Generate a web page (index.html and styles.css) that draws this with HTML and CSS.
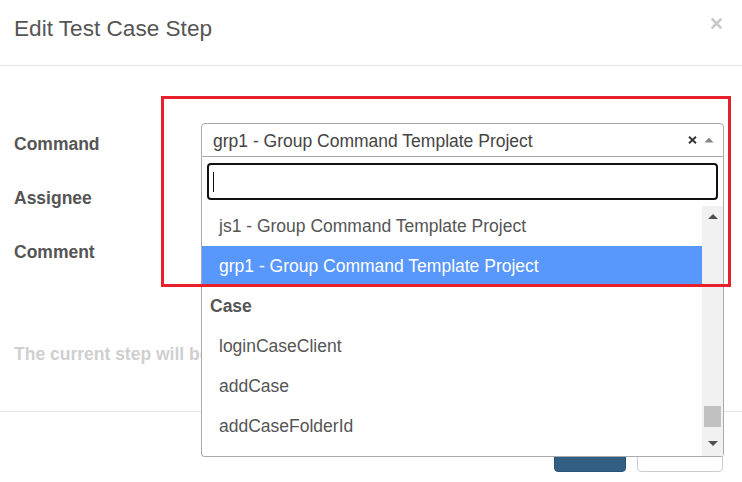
FILE: index.html
```html
<!DOCTYPE html>
<html>
<head>
<meta charset="utf-8">
<title>Edit Test Case Step</title>
<link rel="stylesheet" href="styles.css">
</head>
<body>
<div class="modal">
  <div class="modal-header">
    <h4 class="modal-title">Edit Test Case Step</h4>
    <svg class="close" width="11" height="11" viewBox="0 0 11 11"><path d="M1.5 1.5 L9.5 9.5 M9.5 1.5 L1.5 9.5" stroke="#c9c9c9" stroke-width="2.6" stroke-linecap="square"/></svg>
  </div>
  <div class="modal-body">
    <div class="form-row">
      <label class="form-label">Command</label>
      <div class="select-wrap">
        <div class="select">
          <span class="select-text">grp1 - Group Command Template Project</span>
          <svg class="clear" width="9" height="8" viewBox="0 0 9 8"><path d="M1 0.8 L8 7.2 M8 0.8 L1 7.2" stroke="#333" stroke-width="1.9"/></svg>
          <svg class="arrow" width="10" height="6" viewBox="0 0 10 6"><path d="M0.5 5.5 L5 0.5 L9.5 5.5 Z" fill="#888"/></svg>
        </div>
        <div class="dropdown">
          <div class="search">
            <div class="search-input"><span class="caret"></span></div>
          </div>
          <div class="results">
            <ul class="options">
              <li class="option">js1 - Group Command Template Project</li>
              <li class="option highlighted">grp1 - Group Command Template Project</li>
              <li class="group">
                <div class="group-label">Case</div>
                <ul class="options">
                  <li class="option">loginCaseClient</li>
                  <li class="option">addCase</li>
                  <li class="option">addCaseFolderId</li>
                </ul>
              </li>
            </ul>
            <div class="scrollbar">
              <div class="sb-btn sb-up"><svg width="10" height="5" viewBox="0 0 10 5"><path d="M0 5 L5 0 L10 5 Z" fill="#505050"/></svg></div>
              <div class="sb-track"><div class="sb-thumb"></div></div>
              <div class="sb-btn sb-down"><svg width="10" height="5" viewBox="0 0 10 5"><path d="M0 0 L10 0 L5 5 Z" fill="#505050"/></svg></div>
            </div>
          </div>
        </div>
      </div>
    </div>
    <div class="form-row">
      <label class="form-label">Assignee</label>
      <div class="field"></div>
    </div>
    <div class="form-row">
      <label class="form-label">Comment</label>
      <div class="field"></div>
    </div>
    <p class="note">The current step will be updated.</p>
  </div>
  <div class="modal-footer">
    <button class="btn btn-primary">Save</button>
    <button class="btn btn-default">Cancel</button>
  </div>
  <div class="annotation"></div>
</div>
</body>
</html>
```

FILE: styles.css
```css
html, body {
  margin: 0;
  padding: 0;
  background: #fff;
}
body {
  font-family: "Liberation Sans", Arial, sans-serif;
  font-size: 17.5px;
  color: #555;
}
.modal {
  position: relative;
  width: 742px;
  height: 482px;
  overflow: hidden;
  background: #fff;
}
.modal-header {
  height: 65px;
  border-bottom: 1px solid #e5e5e5;
  padding: 0 20px 0 14px;
  display: flex;
  justify-content: space-between;
  align-items: flex-start;
}
.modal-title {
  margin: 16px 0 0;
  font-size: 22.6px;
  line-height: 26px;
  font-weight: normal;
  color: #555;
}
.close {
  margin-top: 18px;
  display: block;
}
.modal-body {
  box-sizing: border-box;
  height: 345px;
  padding: 57px 18px 0 14px;
}
.form-row {
  display: flex;
  height: 34px;
  margin-bottom: 20px;
}
.form-label {
  width: 187px;
  flex: none;
  padding-top: 11px;
  line-height: 20px;
  font-weight: bold;
  color: #555;
}
.select-wrap, .field {
  position: relative;
  flex: 1;
}
.select {
  box-sizing: border-box;
  height: 34px;
  border: 1px solid #aaa;
  border-radius: 4px 4px 0 0;
  padding: 2px 9px 0 11px;
  display: flex;
  align-items: center;
  background: #fff;
}
.select-text {
  flex: 1;
  line-height: 30px;
  color: #444;
  white-space: nowrap;
}
.clear {
  display: block;
  margin-right: 7px;
  margin-top: -2px;
}
.arrow {
  display: block;
  margin-top: -2px;
}
.dropdown {
  position: absolute;
  left: 0;
  top: 34px;
  width: 523px;
  height: 300px;
  box-sizing: border-box;
  border: 1px solid #aaa;
  border-top: none;
  border-radius: 0 0 4px 4px;
  background: #fff;
  display: flex;
  flex-direction: column;
  z-index: 5;
}
.search {
  padding: 6px 5px;
}
.search-input {
  box-sizing: border-box;
  height: 37px;
  border: 2px solid #111;
  border-radius: 4px;
  display: flex;
  align-items: center;
  padding-left: 4px;
}
.caret {
  display: block;
  width: 1px;
  height: 20px;
  background: #111;
}
.results {
  flex: 1;
  display: flex;
  min-height: 0;
}
.options {
  list-style: none;
  margin: 0;
  padding: 0;
}
.results > .options {
  flex: 1;
  overflow: hidden;
}
.option {
  height: 40px;
  line-height: 40px;
  padding-left: 17px;
  color: #555;
  white-space: nowrap;
}
.option.highlighted {
  background: #5897fb;
  color: #fff;
}
.group-label {
  height: 40px;
  line-height: 40px;
  padding-left: 8px;
  font-weight: bold;
  color: #555;
}
.scrollbar {
  width: 21px;
  flex: none;
  background: #f1f1f1;
  display: flex;
  flex-direction: column;
}
.sb-btn {
  display: flex;
  justify-content: center;
}
.sb-up {
  height: 20px;
  align-items: center;
}
.sb-up svg, .sb-down svg {
  display: block;
}
.sb-down {
  height: 24px;
  padding-top: 9px;
  box-sizing: border-box;
}
.sb-track {
  flex: 1;
}
.sb-thumb {
  margin: 180px 2px 0;
  height: 21px;
  background: #c1c1c1;
}
.note {
  margin: 79px 0 0;
  width: 187px;
  overflow: hidden;
  line-height: 20px;
  font-weight: bold;
  color: #cfcfcf;
  white-space: nowrap;
}
.modal-footer {
  border-top: 1px solid #e5e5e5;
  padding: 15px 19px 0 0;
  display: flex;
  justify-content: flex-end;
  gap: 11px;
}
.btn {
  height: 45px;
  box-sizing: border-box;
  border-radius: 4px;
  font-family: "Liberation Sans", Arial, sans-serif;
  font-size: 15px;
  padding: 0 0 14px;
}
.btn-primary {
  width: 72px;
  background: #335e83;
  border: 1px solid #2c5477;
  color: #fff;
}
.btn-default {
  width: 86px;
  background: #fff;
  border: 1px solid #ccc;
  color: #333;
}
.annotation {
  position: absolute;
  left: 161px;
  top: 96px;
  width: 570px;
  height: 191px;
  box-sizing: border-box;
  border: 3px solid #e8202b;
  z-index: 10;
  pointer-events: none;
}
```
